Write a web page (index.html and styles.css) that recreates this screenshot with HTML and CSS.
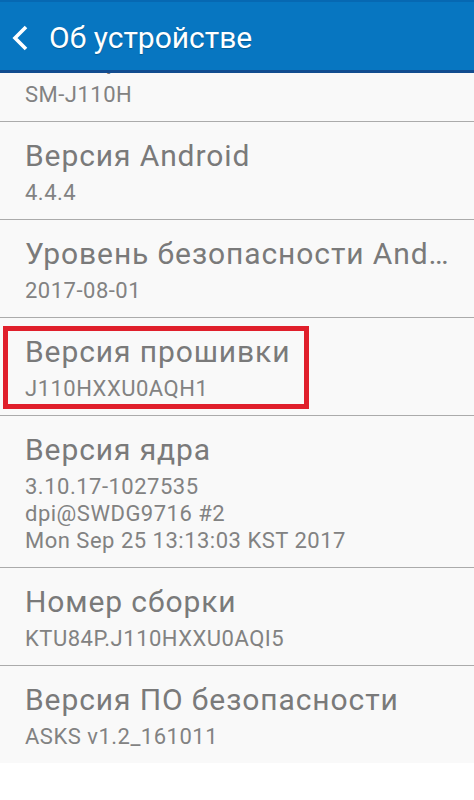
FILE: index.html
```html
<!DOCTYPE html>
<html lang="ru">
<head>
<meta charset="utf-8">
<title>Об устройстве</title>
<link rel="stylesheet" href="styles.css">
</head>
<body>
<div class="screen">
  <header class="appbar">
    <svg class="back" width="20" height="30" viewBox="0 0 20 30" aria-hidden="true">
      <polyline points="15,4 4,15 15,26" fill="none" stroke="#fff" stroke-width="3.6" stroke-linecap="butt" stroke-linejoin="miter"/>
    </svg>
    <h1 class="appbar-title">Об устройстве</h1>
  </header>
  <div class="viewport">
    <ul class="list">
      <li class="row">
        <div class="title">Номер модели</div>
        <div class="sub">SM-J110H</div>
      </li>
      <li class="row">
        <div class="title">Версия Android</div>
        <div class="sub">4.4.4</div>
      </li>
      <li class="row">
        <div class="title">Уровень безопасности Android</div>
        <div class="sub">2017-08-01</div>
      </li>
      <li class="row marked">
        <div class="title">Версия прошивки</div>
        <div class="sub">J110HXXU0AQH1</div>
        <span class="highlight" aria-hidden="true"></span>
      </li>
      <li class="row">
        <div class="title">Версия ядра</div>
        <div class="sub">3.10.17-1027535<br>dpi@SWDG9716 #2<br>Mon Sep 25 13:13:03 KST 2017</div>
      </li>
      <li class="row">
        <div class="title">Номер сборки</div>
        <div class="sub">KTU84P.J110HXXU0AQI5</div>
      </li>
      <li class="row last">
        <div class="title">Версия ПО безопасности</div>
        <div class="sub">ASKS v1.2_161011</div>
      </li>
    </ul>
  </div>
</div>
</body>
</html>
```
FILE: styles.css
```css
* { box-sizing: border-box; }
html, body { margin: 0; padding: 0; }
body {
  background: #ffffff;
  font-family: Roboto, "Noto Sans", "DejaVu Sans", sans-serif;
}
.screen {
  width: 474px;
  height: 800px;
  overflow: hidden;
  display: flex;
  flex-direction: column;
  background: #ffffff;
}
.appbar {
  position: relative;
  z-index: 2;
  flex: 0 0 73px;
  display: flex;
  align-items: center;
  background: #0776c1;
  border-top: 2px solid #0668b2;
  border-bottom: 3px solid #124c8f;
  padding-left: 11px;
}
.back { display: block; flex: 0 0 auto; margin-top: 4px; }
.appbar-title {
  margin: 0 0 0 18px;
  font-weight: 400;
  font-size: 30px;
  line-height: 36px;
  color: #ffffff;
  text-shadow: 0 1px 1px rgba(0, 0, 0, 0.25);
  white-space: nowrap;
  padding-top: 3px;
}
.viewport {
  flex: 1 1 auto;
  overflow: hidden;
}
.list {
  list-style: none;
  margin: -49px 0 0 0;
  padding: 0;
}
.row {
  position: relative;
  background: #f9f9f9;
  border-bottom: 1px solid #ababab;
  padding: 17px 25px 13px 25px;
}
.row.last { border-bottom: 0; }
.title {
  font-size: 30px;
  line-height: 34px;
  color: #7a7a7a;
  letter-spacing: 0.9px;
  white-space: nowrap;
  overflow: hidden;
  text-overflow: ellipsis;
  margin-bottom: 6px;
}
.sub {
  font-size: 22px;
  line-height: 27px;
  color: #828282;
  letter-spacing: 0.5px;
  white-space: nowrap;
}
.highlight {
  position: absolute;
  left: 3px;
  top: 8px;
  width: 306px;
  height: 83px;
  border: 5px solid #e01f2b;
  pointer-events: none;
}
```
